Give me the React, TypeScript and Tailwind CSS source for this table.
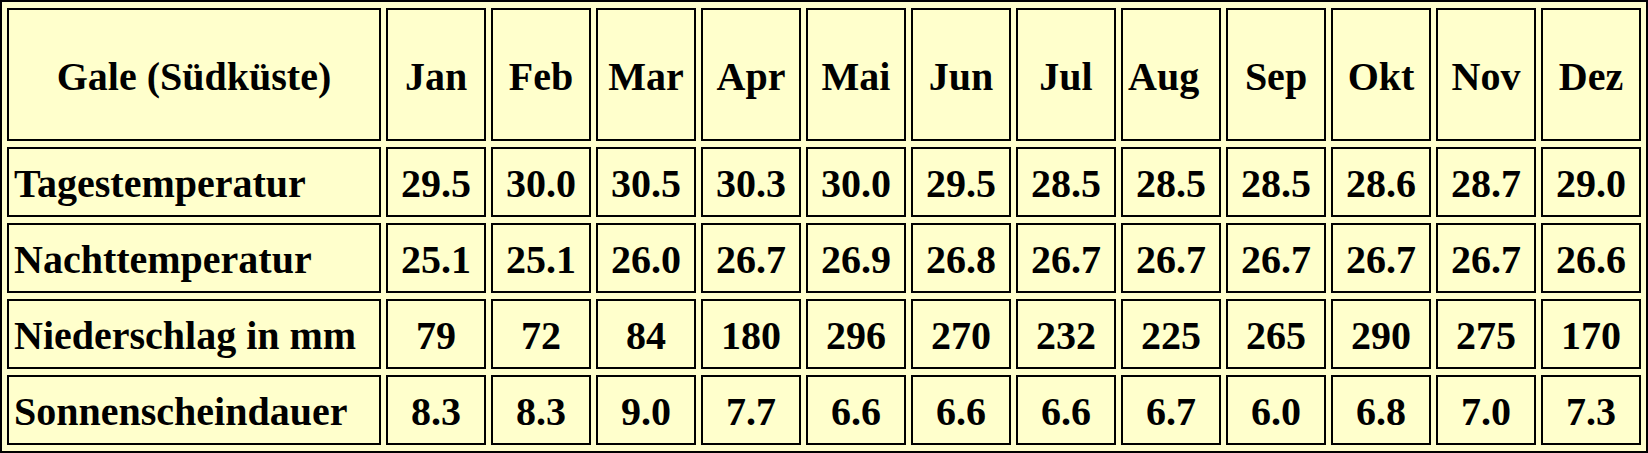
import React from "react";

const months = ["Jan", "Feb", "Mar", "Apr", "Mai", "Jun", "Jul", "Aug", "Sep", "Okt", "Nov", "Dez"];

const rows: { label: string; values: string[] }[] = [
  { label: "Tagestemperatur", values: ["29.5", "30.0", "30.5", "30.3", "30.0", "29.5", "28.5", "28.5", "28.5", "28.6", "28.7", "29.0"] },
  { label: "Nachttemperatur", values: ["25.1", "25.1", "26.0", "26.7", "26.9", "26.8", "26.7", "26.7", "26.7", "26.7", "26.7", "26.6"] },
  { label: "Niederschlag in mm", values: ["79", "72", "84", "180", "296", "270", "232", "225", "265", "290", "275", "170"] },
  { label: "Sonnenscheindauer", values: ["8.3", "8.3", "9.0", "7.7", "6.6", "6.6", "6.6", "6.7", "6.0", "6.8", "7.0", "7.3"] },
];

export default function App() {
  return (
    <div className="w-[1648px] h-[453px] bg-[#ffffcc] overflow-hidden font-['Liberation_Serif',serif] text-black">
      <table className="table-fixed w-[1648px] border-2 border-black border-separate border-spacing-x-[5px] border-spacing-y-[6px] font-bold text-[40px] leading-[1.15]">
        <colgroup>
          <col className="w-[374px]" />
          {months.map((m) => (
            <col key={m} className="w-[100px]" />
          ))}
        </colgroup>
        <tbody>
          <tr>
            <td className="h-[133px] border-2 border-black px-[5px] pt-[4px] text-center align-middle">Gale (Südküste)</td>
            {months.map((m) => (
              <td
                key={m}
                className={
                  m === "Aug"
                    ? "h-[133px] border-2 border-black px-[5px] pt-[4px] text-left align-middle"
                    : "h-[133px] border-2 border-black px-[5px] pt-[4px] text-center align-middle"
                }
              >
                {m}
              </td>
            ))}
          </tr>
          {rows.map((r) => (
            <tr key={r.label}>
              <td className="h-[70px] border-2 border-black px-[5px] pt-[3px] text-left align-middle whitespace-nowrap">{r.label}</td>
              {r.values.map((v, i) => (
                <td key={i} className="h-[70px] border-2 border-black px-[2px] pt-[3px] text-center align-middle">
                  {v}
                </td>
              ))}
            </tr>
          ))}
        </tbody>
      </table>
    </div>
  );
}
